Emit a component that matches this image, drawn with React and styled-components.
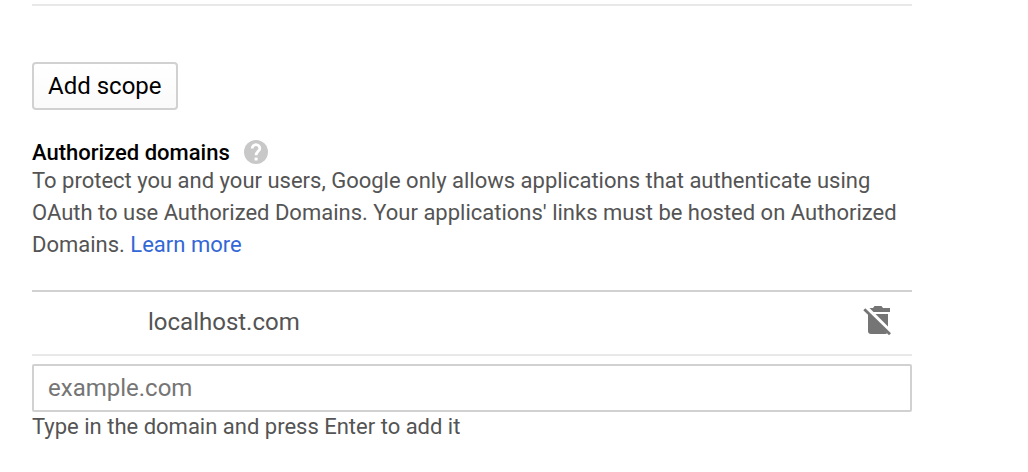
import React from "react";
import styled, { createGlobalStyle } from "styled-components";

const Global = createGlobalStyle`
  * { box-sizing: border-box; }
  body { margin: 0; background: #fff; color: #545454; font: 22px/32px Roboto, sans-serif; }
`;

const Page = styled.main`
  max-width: 944px;
  padding: 4px 32px 24px;
`;

const ScopeSection = styled.section`
  border-top: 2px solid #e8e8e8;
  padding-top: 56px;
`;

const ScopeButton = styled.button`
  display: block;
  height: 48px;
  padding: 0 14px;
  border: 2px solid #d1d1d1;
  border-radius: 4px;
  background: linear-gradient(#fff, #fafafa);
  color: #000;
  font: 24px/28px Roboto, sans-serif;
`;

const DomainsSection = styled.section`
  padding-top: 30px;
`;

const Heading = styled.div`
  display: flex;
  align-items: flex-start;
  gap: 14px;
  height: 25px;
`;

const Title = styled.h2`
  margin: 0;
  color: #000;
  font-size: 22px;
  font-weight: 500;
  line-height: 26px;
`;

const HelpButton = styled.button`
  width: 24px;
  height: 24px;
  padding: 0;
  border: 0;
  background: none;
  svg { display: block; }
`;

const Description = styled.p`
  margin: 0;
`;

const Link = styled.a`
  color: #3367d6;
  text-decoration: none;
`;

const DomainList = styled.ul`
  list-style: none;
  margin: 29px 0 8px;
  padding: 0;
  border-top: 2px solid #d1d1d1;
`;

const DomainRow = styled.li`
  display: flex;
  align-items: center;
  justify-content: space-between;
  height: 64px;
  padding: 0 18px 2px 116px;
  border-bottom: 2px solid #e8e8e8;
  font-size: 24px;
`;

const DeleteButton = styled.button`
  width: 32px;
  height: 32px;
  padding: 0;
  border: 0;
  background: none;
  svg { display: block; }
`;

const DomainInput = styled.input`
  display: block;
  width: 100%;
  height: 48px;
  padding: 0 14px;
  border: 2px solid #d1d1d1;
  border-radius: 2px;
  background: #fff;
  color: #333;
  font: 24px/28px Roboto, sans-serif;
  &::placeholder { color: #757575; opacity: 1; }
`;

const Hint = styled.label`
  display: block;
  line-height: 30px;
`;

export default function App() {
  return (
    <>
      <Global />
      <Page>
        <ScopeSection>
          <ScopeButton type="button">Add scope</ScopeButton>
        </ScopeSection>
        <DomainsSection>
          <Heading>
            <Title>Authorized domains</Title>
            <HelpButton type="button" aria-label="Help">
              <svg width="24" height="24" viewBox="0 0 24 24">
                <circle cx="12" cy="12" r="12" fill="#c8c8c8" />
                <path d="M8.2 8.4a3.8 3.8 0 1 1 7.6 0c0 2.8-3.7 3.2-3.7 6.8" fill="none" stroke="#fff" strokeWidth="2.8" />
                <path d="M10.6 17.6h3v2.9h-3z" fill="#fff" />
              </svg>
            </HelpButton>
          </Heading>
          <Description>
            To protect you and your users, Google only allows applications that authenticate using
            OAuth to use Authorized Domains. Your applications' links must be hosted on Authorized
            Domains. <Link href="#learn-more">Learn more</Link>
          </Description>
          <DomainList>
            <DomainRow>
              <span>localhost.com</span>
              <DeleteButton type="button" aria-label="Delete localhost.com">
                <svg width="32" height="32" viewBox="0 0 32 32" fill="#757575">
                  <path d="M7.5 2H11l1.5-2h7L21 2h7v4H11.5z" />
                  <path d="M13.5 8H26v12.5z" />
                  <path d="M6 6.5L25.3 27q-.8 1-2.3 1H9q-3 0-3-3z" />
                  <path d="M2.3 3.3l25.7 25" stroke="#757575" strokeWidth="2.8" />
                </svg>
              </DeleteButton>
            </DomainRow>
          </DomainList>
          <DomainInput id="domain" type="text" placeholder="example.com" />
          <Hint htmlFor="domain">Type in the domain and press Enter to add it</Hint>
        </DomainsSection>
      </Page>
    </>
  );
}
